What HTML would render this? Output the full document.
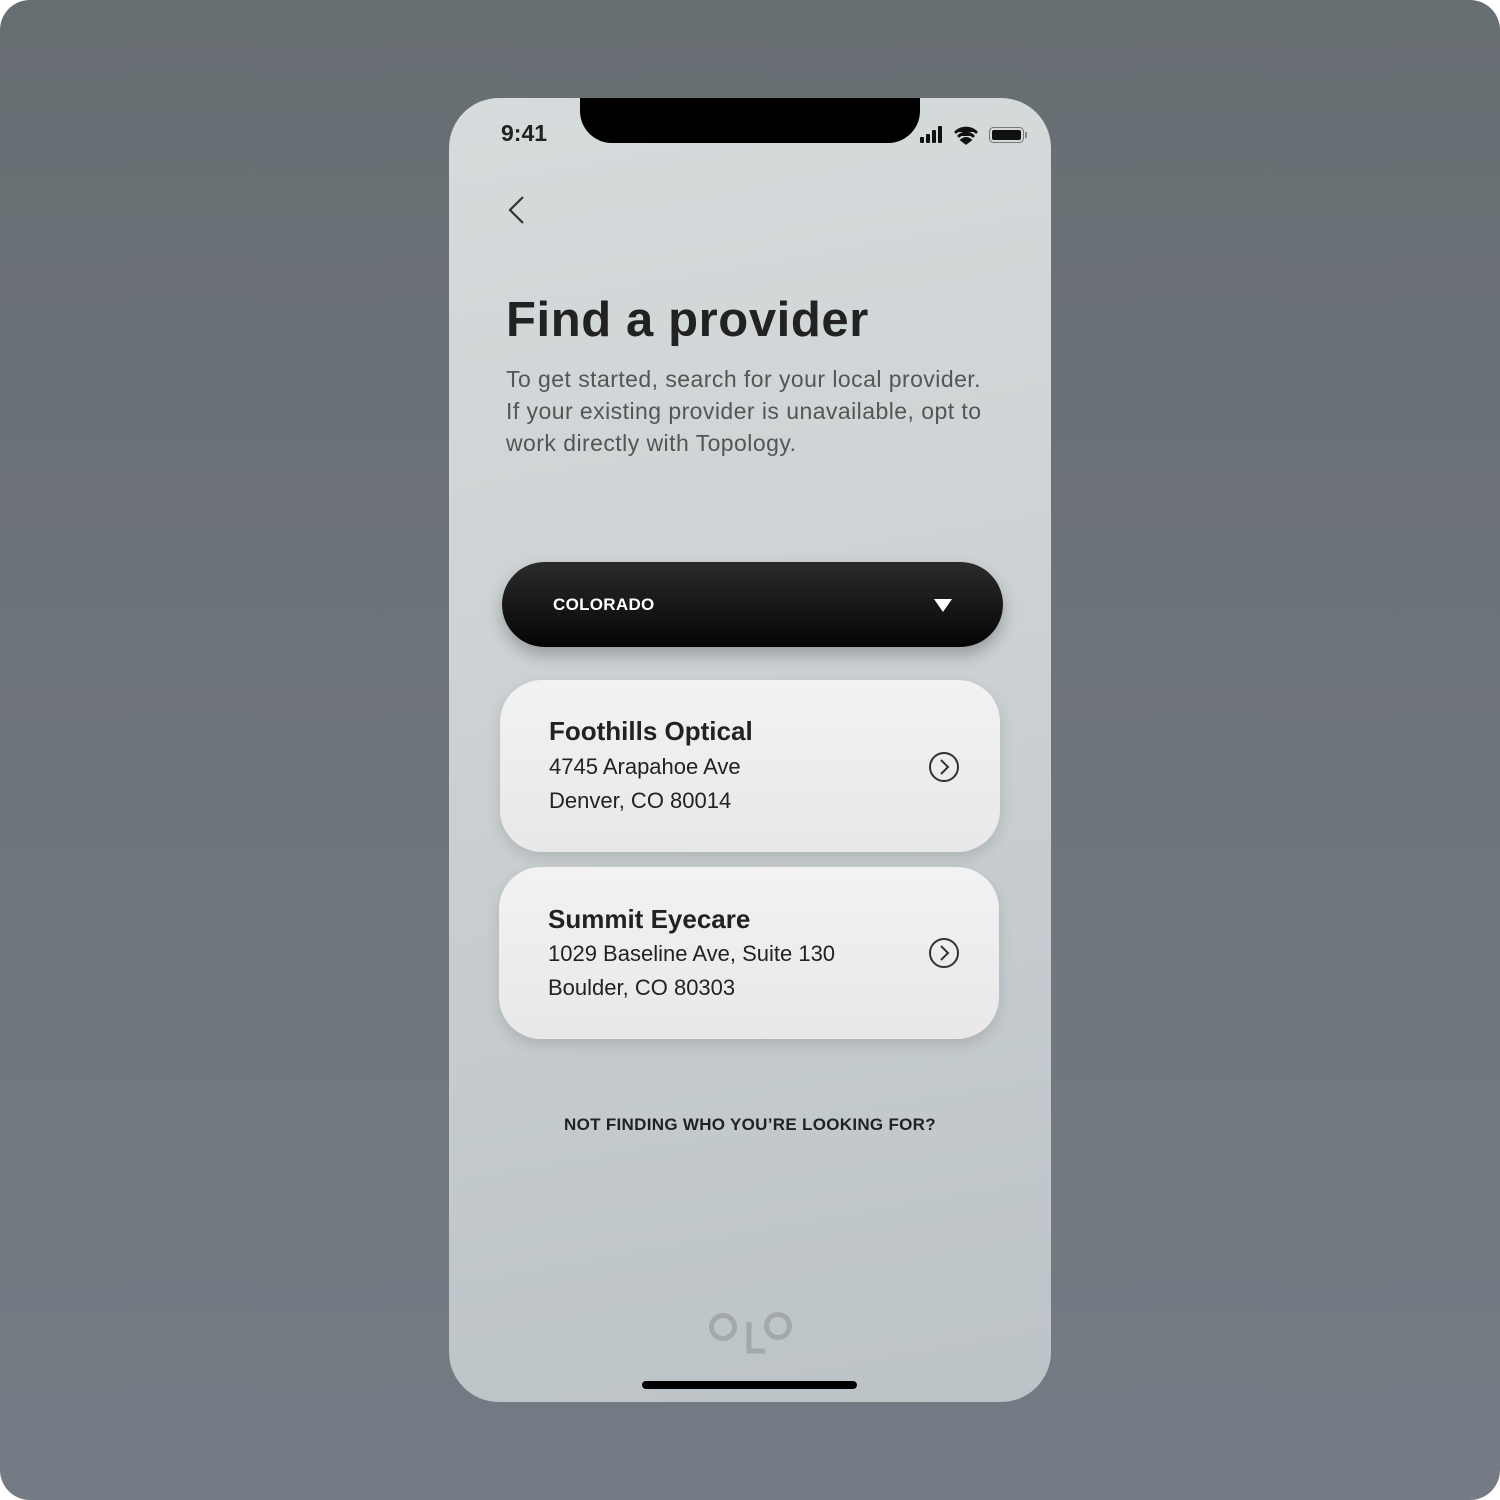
<!DOCTYPE html>
<html><head><style>
*{margin:0;padding:0;box-sizing:border-box}
body{width:1500px;height:1500px;background:#fff;font-family:"Liberation Sans",sans-serif;position:relative;overflow:hidden}
.bg{position:absolute;inset:0;border-radius:30px;background:linear-gradient(#676e72,#757b84)}
.ph{position:absolute;left:449px;top:98px;width:602px;height:1304px;border-radius:50px;background:linear-gradient(170deg,#d6dbdc 0%,#cdd2d4 40%,#bcc3c6 100%);overflow:hidden}
.notch{position:absolute;left:131px;top:0;width:340px;height:45px;background:#000;border-radius:0 0 32px 32px}
.t{position:absolute;color:#222}
.card{position:absolute;left:51px;width:500px;height:172px;border-radius:42px;background:linear-gradient(#f2f2f2,#e9e8e9);box-shadow:0 6px 14px rgba(0,0,0,.12)}
.card .n{position:absolute;left:49px;top:36px;font-size:26px;font-weight:bold;color:#222}
.card .a{position:absolute;left:49px;top:70px;font-size:22px;color:#222;line-height:34px}
.card svg{position:absolute;left:428px;top:71px}
</style></head><body>
<div class="bg"></div>
<div class="ph">
<div class="notch"></div>
<div class="t" style="left:52px;top:22px;font-size:23px;font-weight:bold">9:41</div>
<svg style="position:absolute;left:470px;top:27px" width="110" height="20">
<rect x="1" y="12" width="4" height="6" rx="1" fill="#111"/><rect x="7" y="9" width="4" height="9" rx="1" fill="#111"/><rect x="13" y="5" width="4" height="13" rx="1" fill="#111"/><rect x="19" y="1" width="4" height="17" rx="1" fill="#111"/>
<path d="M37 7a15 15 0 0 1 20 0M40 11a10 10 0 0 1 14 0M43 15l4 3 4-3a6 6 0 0 0-8 0z" stroke="#111" stroke-width="3" fill="#111" stroke-linecap="round"/>
<rect x="70.5" y="2.5" width="34" height="15" rx="4" fill="none" stroke="#777"/><rect x="73" y="5" width="29" height="10" rx="2" fill="#111"/><rect x="106" y="7" width="2" height="6" fill="#888"/>
</svg>
<svg style="position:absolute;left:57px;top:97px" width="20" height="32"><path d="M17 2L4 15l13 13" stroke="#333" stroke-width="2.2" fill="none"/></svg>
<div class="t" style="left:57px;top:194px;font-size:49px;font-weight:bold;letter-spacing:0.6px">Find a provider</div>
<div class="t" style="left:57px;top:265px;font-size:23px;line-height:32px;color:#555;letter-spacing:0.45px">To get started, search for your local provider.<br>If your existing provider is unavailable, opt to<br>work directly with Topology.</div>
<div style="position:absolute;left:53px;top:464px;width:501px;height:85px;border-radius:43px;background:linear-gradient(#2b2b2b,#050505);box-shadow:0 8px 16px rgba(0,0,0,.25)">
<div style="position:absolute;left:51px;top:33px;color:#fff;font-size:17px;font-weight:bold;letter-spacing:0.3px">COLORADO</div>
<svg style="position:absolute;left:432px;top:37px" width="18" height="14"><path d="M0 0h18L9 13z" fill="#fff"/></svg>
</div>
<div class="card" style="top:582px"><div class="n">Foothills Optical</div><div class="a">4745 Arapahoe Ave<br>Denver, CO 80014</div><svg width="32" height="32"><circle cx="16" cy="16" r="14" stroke="#333" stroke-width="2" fill="none"/><path d="M13 9l7 7-7 7" stroke="#333" stroke-width="2" fill="none"/></svg></div>
<div class="card" style="top:769px;left:50px"><div class="n" style="top:37px">Summit Eyecare</div><div class="a" style="top:70px">1029 Baseline Ave, Suite 130<br>Boulder, CO 80303</div><svg width="32" height="32" style="left:429px;top:70px"><circle cx="16" cy="16" r="14" stroke="#333" stroke-width="2" fill="none"/><path d="M13 9l7 7-7 7" stroke="#333" stroke-width="2" fill="none"/></svg></div>
<div class="t" style="left:0;width:602px;text-align:center;top:1017px;font-size:17px;font-weight:bold;letter-spacing:0.3px">NOT FINDING WHO YOU’RE LOOKING FOR?</div>
<svg style="position:absolute;left:258px;top:1208px" width="90" height="50"><g stroke="#a3a8aa" stroke-width="5" fill="none"><circle cx="16" cy="21" r="11.5"/><path d="M42 16v29h16"/><circle cx="71" cy="20" r="11.5"/></g></svg>
<div style="position:absolute;left:193px;top:1283px;width:215px;height:8px;border-radius:4px;background:#000"></div>
</div>
</body></html>
